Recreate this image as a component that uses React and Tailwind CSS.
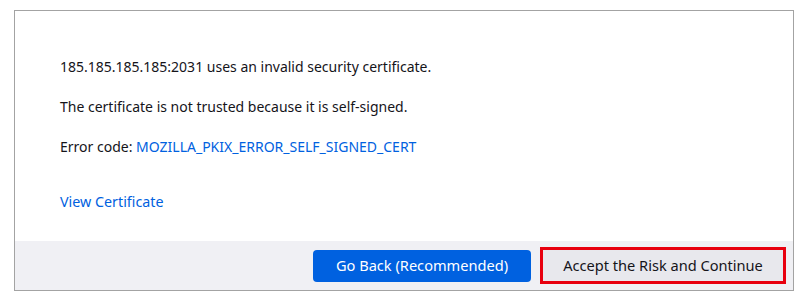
export default function App() {
  return (
    <div className="w-[804px] h-[300px] bg-white pt-[10px] pl-[14px]" style={{ fontFamily: '"Noto Sans", "Open Sans", sans-serif' }}>
      <div className="w-[780px] h-[281px] border border-[#a3a3a3] flex flex-col">
        <div className="flex-1 pl-[45px] pt-[46px] text-[14px] leading-[20px] text-[#15141a]">
          <p>185.185.185.185:2031 uses an invalid security certificate.</p>
          <p className="mt-[20px]">The certificate is not trusted because it is self-signed.</p>
          <p className="mt-[20px]">
            Error code: <span className="text-[#0061e0]">MOZILLA_PKIX_ERROR_SELF_SIGNED_CERT</span>
          </p>
          <p className="mt-[35px] text-[#0061e0] text-[14.3px]">View Certificate</p>
        </div>
        <div className="h-[49px] bg-[#f0f0f4] flex items-center justify-end gap-[9px] pr-[7px]">
          <button className="w-[218px] h-[32px] rounded-[4px] bg-[#0061e0] text-white text-[14.6px]">
            Go Back (Recommended)
          </button>
          <div className="w-[246px] h-[37px] border-[3px] border-[#e8000f] bg-[#e8e8ed] flex items-center justify-center text-[14.6px] text-[#15141a]">
            Accept the Risk and Continue
          </div>
        </div>
      </div>
    </div>
  )
}
